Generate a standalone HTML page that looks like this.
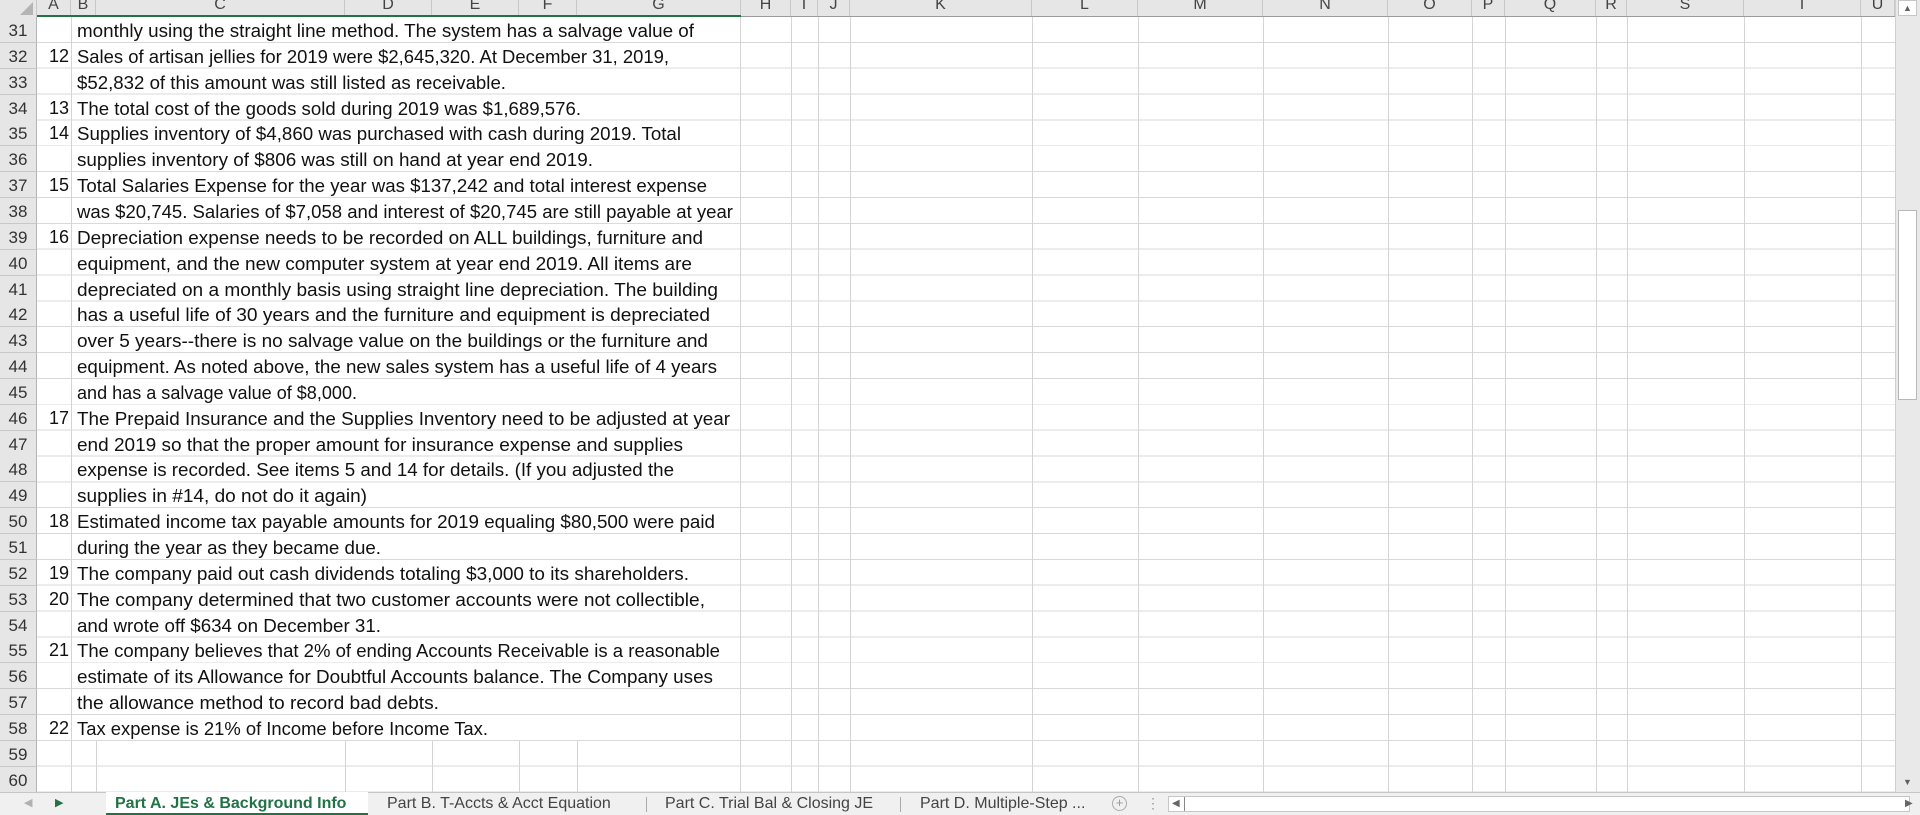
<!DOCTYPE html>
<html><head><meta charset="utf-8"><style>
body{margin:0;width:1920px;height:815px;overflow:hidden;background:#fff;font-family:"Liberation Sans",sans-serif;position:relative}
.a{position:absolute}
.hdr{top:0;height:17px;background:#e6e6e6;border-right:1px solid #c8c8c8;box-sizing:border-box;font-size:16px;color:#444;text-align:center;line-height:10px;overflow:hidden}
.rh{left:0;width:37px;height:26px;background:#e6e6e6;border-bottom:1px solid #c8c8c8;border-right:1px solid #b5b5b5;box-sizing:border-box;font-size:17px;color:#333;text-align:center;line-height:27px}
.vl{width:1px;background:#d4d4d4}
.tx{left:77px;font-size:18.5px;color:#111;line-height:27px;white-space:nowrap;transform-origin:0 0}
.nm{left:37px;width:32px;text-align:right;font-size:18px;color:#111;line-height:27px}
.tab{top:792px;height:23px;font-size:16px;line-height:23px;color:#444;white-space:nowrap}
</style></head><body>
<div class="a" style="left:37px;top:17px;width:1858px;height:776px;background:repeating-linear-gradient(to bottom,transparent 0,transparent 24.85px,#d9d9d9 24.85px,#d9d9d9 25.85px)"></div>
<div class="a vl" style="left:71px;top:17px;height:776px"></div>
<div class="a vl" style="left:740px;top:17px;height:776px"></div>
<div class="a vl" style="left:791px;top:17px;height:776px"></div>
<div class="a vl" style="left:818px;top:17px;height:776px"></div>
<div class="a vl" style="left:850px;top:17px;height:776px"></div>
<div class="a vl" style="left:1032px;top:17px;height:776px"></div>
<div class="a vl" style="left:1138px;top:17px;height:776px"></div>
<div class="a vl" style="left:1263px;top:17px;height:776px"></div>
<div class="a vl" style="left:1388px;top:17px;height:776px"></div>
<div class="a vl" style="left:1472px;top:17px;height:776px"></div>
<div class="a vl" style="left:1505px;top:17px;height:776px"></div>
<div class="a vl" style="left:1596px;top:17px;height:776px"></div>
<div class="a vl" style="left:1627px;top:17px;height:776px"></div>
<div class="a vl" style="left:1744px;top:17px;height:776px"></div>
<div class="a vl" style="left:1861px;top:17px;height:776px"></div>
<div class="a vl" style="left:96px;top:741px;height:52px"></div>
<div class="a vl" style="left:345px;top:741px;height:52px"></div>
<div class="a vl" style="left:432px;top:741px;height:52px"></div>
<div class="a vl" style="left:519px;top:741px;height:52px"></div>
<div class="a vl" style="left:577px;top:741px;height:52px"></div>

<div class="a hdr" style="left:0;width:37px;background:#e6e6e6"><svg width="37" height="17"><polygon points="33,2 33,15 20,15" fill="#b4b4b4"/></svg></div>
<div class="a hdr" style="left:37px;width:34px">A</div>
<div class="a hdr" style="left:71px;width:25px">B</div>
<div class="a hdr" style="left:96px;width:249px">C</div>
<div class="a hdr" style="left:345px;width:87px">D</div>
<div class="a hdr" style="left:432px;width:87px">E</div>
<div class="a hdr" style="left:519px;width:58px">F</div>
<div class="a hdr" style="left:577px;width:164px">G</div>
<div class="a hdr" style="left:741px;width:50px">H</div>
<div class="a hdr" style="left:791px;width:27px">I</div>
<div class="a hdr" style="left:818px;width:32px">J</div>
<div class="a hdr" style="left:850px;width:182px">K</div>
<div class="a hdr" style="left:1032px;width:106px">L</div>
<div class="a hdr" style="left:1138px;width:125px">M</div>
<div class="a hdr" style="left:1263px;width:125px">N</div>
<div class="a hdr" style="left:1388px;width:84px">O</div>
<div class="a hdr" style="left:1472px;width:33px">P</div>
<div class="a hdr" style="left:1505px;width:91px">Q</div>
<div class="a hdr" style="left:1596px;width:31px">R</div>
<div class="a hdr" style="left:1627px;width:117px">S</div>
<div class="a hdr" style="left:1744px;width:117px">T</div>
<div class="a hdr" style="left:1861px;width:34px">U</div>
<div class="a" style="left:37px;top:16px;width:1858px;height:1px;background:#9b9b9b"></div>
<div class="a" style="left:37px;top:15px;width:704px;height:2px;background:#217346"></div>

<div class="a rh" style="top:17px">31</div>
<div class="a rh" style="top:42.85px">32</div>
<div class="a rh" style="top:68.7px">33</div>
<div class="a rh" style="top:94.55px">34</div>
<div class="a rh" style="top:120.4px">35</div>
<div class="a rh" style="top:146.25px">36</div>
<div class="a rh" style="top:172.1px">37</div>
<div class="a rh" style="top:197.95px">38</div>
<div class="a rh" style="top:223.8px">39</div>
<div class="a rh" style="top:249.65px">40</div>
<div class="a rh" style="top:275.5px">41</div>
<div class="a rh" style="top:301.35px">42</div>
<div class="a rh" style="top:327.2px">43</div>
<div class="a rh" style="top:353.05px">44</div>
<div class="a rh" style="top:378.9px">45</div>
<div class="a rh" style="top:404.75px">46</div>
<div class="a rh" style="top:430.6px">47</div>
<div class="a rh" style="top:456.45px">48</div>
<div class="a rh" style="top:482.3px">49</div>
<div class="a rh" style="top:508.15px">50</div>
<div class="a rh" style="top:534px">51</div>
<div class="a rh" style="top:559.85px">52</div>
<div class="a rh" style="top:585.7px">53</div>
<div class="a rh" style="top:611.55px">54</div>
<div class="a rh" style="top:637.4px">55</div>
<div class="a rh" style="top:663.25px">56</div>
<div class="a rh" style="top:689.1px">57</div>
<div class="a rh" style="top:714.95px">58</div>
<div class="a rh" style="top:740.8px">59</div>
<div class="a rh" style="top:766.65px">60</div>

<div class="a nm" style="top:42.85px">12</div>
<div class="a nm" style="top:94.55px">13</div>
<div class="a nm" style="top:120.4px">14</div>
<div class="a nm" style="top:172.1px">15</div>
<div class="a nm" style="top:223.8px">16</div>
<div class="a nm" style="top:404.75px">17</div>
<div class="a nm" style="top:508.15px">18</div>
<div class="a nm" style="top:559.85px">19</div>
<div class="a nm" style="top:585.7px">20</div>
<div class="a nm" style="top:637.4px">21</div>
<div class="a nm" style="top:714.95px">22</div>

<div class="a tx" style="top:17px" title="694">monthly using the straight line method. The system has a salvage value of</div>
<div class="a tx" style="top:42.85px" title="669">Sales of artisan jellies for 2019 were $2,645,320. At December 31, 2019,</div>
<div class="a tx" style="top:68.7px" title="506">$52,832 of this amount was still listed as receivable.</div>
<div class="a tx" style="top:94.55px" title="581">The total cost of the goods sold during 2019 was $1,689,576.</div>
<div class="a tx" style="top:120.4px" title="681">Supplies inventory of $4,860 was purchased with cash during 2019. Total</div>
<div class="a tx" style="top:146.25px" title="593">supplies inventory of $806 was still on hand at year end 2019.</div>
<div class="a tx" style="top:172.1px" title="707">Total Salaries Expense for the year was $137,242 and total interest expense</div>
<div class="a tx" style="top:197.95px" title="733">was $20,745. Salaries of $7,058 and interest of $20,745 are still payable at year</div>
<div class="a tx" style="top:223.8px" title="703">Depreciation expense needs to be recorded on ALL buildings, furniture and</div>
<div class="a tx" style="top:249.65px" title="692">equipment, and the new computer system at year end 2019. All items are</div>
<div class="a tx" style="top:275.5px" title="718">depreciated on a monthly basis using straight line depreciation. The building</div>
<div class="a tx" style="top:301.35px" title="710">has a useful life of 30 years and the furniture and equipment is depreciated</div>
<div class="a tx" style="top:327.2px" title="708">over 5 years--there is no salvage value on the buildings or the furniture and</div>
<div class="a tx" style="top:353.05px" title="717">equipment. As noted above, the new sales system has a useful life of 4 years</div>
<div class="a tx" style="top:378.9px" title="357">and has a salvage value of $8,000.</div>
<div class="a tx" style="top:404.75px" title="730">The Prepaid Insurance and the Supplies Inventory need to be adjusted at year</div>
<div class="a tx" style="top:430.6px" title="683">end 2019 so that the proper amount for insurance expense and supplies</div>
<div class="a tx" style="top:456.45px" title="674">expense is recorded. See items 5 and 14 for details. (If you adjusted the</div>
<div class="a tx" style="top:482.3px" title="367">supplies in #14, do not do it again)</div>
<div class="a tx" style="top:508.15px" title="715">Estimated income tax payable amounts for 2019 equaling $80,500 were paid</div>
<div class="a tx" style="top:534px" title="381">during the year as they became due.</div>
<div class="a tx" style="top:559.85px" title="689">The company paid out cash dividends totaling $3,000 to its shareholders.</div>
<div class="a tx" style="top:585.7px" title="705">The company determined that two customer accounts were not collectible,</div>
<div class="a tx" style="top:611.55px" title="381">and wrote off $634 on December 31.</div>
<div class="a tx" style="top:637.4px" title="720">The company believes that 2% of ending Accounts Receivable is a reasonable</div>
<div class="a tx" style="top:663.25px" title="713">estimate of its Allowance for Doubtful Accounts balance. The Company uses</div>
<div class="a tx" style="top:689.1px" title="439">the allowance method to record bad debts.</div>
<div class="a tx" style="top:714.95px" title="488">Tax expense is 21% of Income before Income Tax.</div>

<div class="a" style="left:1895px;top:0;width:25px;height:792px;background:#e9e9e9;border-left:1px solid #d0d0d0;box-sizing:border-box"></div>
<div class="a" style="left:1898px;top:0;width:19px;height:16px;background:#fff;border:1px solid #c6c6c6;box-sizing:border-box;font-size:9px;color:#606060;text-align:center;line-height:14px">▲</div>
<div class="a" style="left:1898px;top:210px;width:19px;height:190px;background:#fff;border:1px solid #b8b8b8;box-sizing:border-box"></div>
<div class="a" style="left:1898px;top:774px;width:19px;height:16px;font-size:9px;color:#606060;text-align:center;line-height:16px">▼</div>

<div class="a" style="left:0;top:792px;width:1920px;height:23px;background:#f0f0f0;border-top:1px solid #c6c6c6;box-sizing:border-box"></div>
<div class="a tab" style="left:24px;color:#b0b0b0;font-size:11px">◀</div>
<div class="a tab" style="left:55px;color:#217346;font-size:11px">▶</div>
<div class="a" style="left:106px;top:792px;width:262px;height:23px;background:#fff;border-bottom:2px solid #217346;box-sizing:border-box"></div>
<div class="a tab" style="left:115px;color:#217346;font-weight:bold;font-size:16px">Part A. JEs &amp; Background Info</div>
<div class="a tab" style="left:387px">Part B. T-Accts &amp; Acct Equation</div>
<div class="a" style="left:646px;top:797px;width:1px;height:15px;background:#aaa"></div>
<div class="a tab" style="left:665px">Part C. Trial Bal &amp; Closing JE</div>
<div class="a" style="left:900px;top:797px;width:1px;height:15px;background:#aaa"></div>
<div class="a tab" style="left:920px">Part D. Multiple-Step ...</div>
<div class="a" style="left:1112px;top:796px;width:15px;height:15px;border:1px solid #aaa;border-radius:50%;box-sizing:border-box;color:#999;font-size:13px;line-height:12px;text-align:center">+</div>
<div class="a tab" style="left:1146px;color:#999;font-size:14px">⋮</div>
<div class="a" style="left:1168px;top:796px;width:742px;height:16px;background:#fff;border:1px solid #c6c6c6;box-sizing:border-box"></div>
<div class="a" style="left:1172px;top:797px;font-size:10px;color:#666;line-height:14px">◀</div>
<div class="a" style="left:1184px;top:797px;width:1px;height:14px;background:#888"></div>
<div class="a" style="left:1905px;top:797px;font-size:10px;color:#666;line-height:14px">▶</div>
<script>
document.querySelectorAll('.tx').forEach(function(e){
  var t=parseFloat(e.getAttribute('title'));e.removeAttribute('title');
  var w=e.getBoundingClientRect().width;var target=t-77;
  if(w>0&&target>0)e.style.transform='scaleX('+(target/w)+')';
});
</script>
</body></html>
